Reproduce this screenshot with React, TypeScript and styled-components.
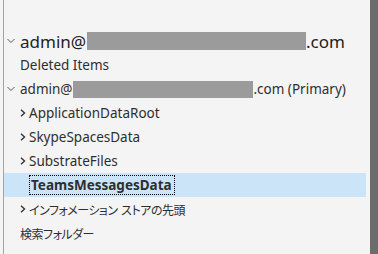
import React from "react";
import styled, { createGlobalStyle } from "styled-components";

const GlobalStyle = createGlobalStyle`
  html, body { margin: 0; padding: 0; background: #f4f4f4; }
  body { font-family: "Noto Sans", "Noto Sans CJK JP", sans-serif; }
`;

const Frame = styled.div`
  display: flex;
  width: 378px;
  height: 254px;
  background: #f4f4f4;
  overflow: hidden;
`;

const Pane = styled.div`
  flex: 1;
  margin-left: 3px;
  border-left: 1px solid #a3a3a3;
  padding: 29px 4px 0 0;
  display: flex;
  flex-direction: column;
`;

const Scrollbar = styled.div`
  width: 8px;
  background: #6c6c6c;
`;

const Row = styled.div<{ $indent: number; $selected?: boolean }>`
  height: 24px;
  display: flex;
  align-items: center;
  padding-left: ${(p) => p.$indent}px;
  background: ${(p) => (p.$selected ? "#cce4f7" : "transparent")};
  color: #2e2e2e;
  font-size: 13.5px;
  white-space: nowrap;
`;

const ChevronBox = styled.span<{ $w: number }>`
  display: inline-flex;
  align-items: center;
  justify-content: flex-start;
  width: ${(p) => p.$w}px;
  flex: none;
`;

const Label = styled.span<{ $size?: number }>`
  font-size: ${(p) => p.$size ?? 13.5}px;
  color: ${(p) => (p.$size ? "#222" : "#2e2e2e")};
  display: inline-flex;
  align-items: center;
`;

const JaLabel = styled.span`
  font-family: "Noto Sans CJK JP", sans-serif;
  font-size: 12px;
  font-feature-settings: "palt";
  letter-spacing: -0.5px;
  word-spacing: 1.5px;
  color: #2e2e2e;
`;

const Redact = styled.span<{ $w: number; $h: number }>`
  display: inline-block;
  width: ${(p) => p.$w}px;
  height: ${(p) => p.$h}px;
  background: #9b9b9b;
  margin-left: 1px;
`;

const Focus = styled.span`
  font-weight: 700;
  color: #2e2e2e;
  border: 1px dotted #000;
  padding: 0 2px 0 1px;
  height: 18px;
  display: inline-flex;
  align-items: center;
`;

const Down = () => (
  <svg width="8" height="6" viewBox="0 0 8 6">
    <path d="M0.5 1 L4 4.5 L7.5 1" fill="none" stroke="#555" strokeWidth="1" />
  </svg>
);

const Right = () => (
  <svg width="6" height="8" viewBox="0 0 6 8">
    <path d="M1 0.8 L4.5 4 L1 7.2" fill="none" stroke="#333" strokeWidth="1.4" />
  </svg>
);

export default function App() {
  return (
    <>
      <GlobalStyle />
      <Frame>
        <Pane>
          <Row $indent={3}>
            <ChevronBox $w={13}><Down /></ChevronBox>
            <Label $size={17}>admin@<Redact $w={219} $h={18} />.com</Label>
          </Row>
          <Row $indent={16}>
            <Label>Deleted Items</Label>
          </Row>
          <Row $indent={3}>
            <ChevronBox $w={13}><Down /></ChevronBox>
            <Label>admin@<Redact $w={180} $h={17} />.com (Primary)</Label>
          </Row>
          <Row $indent={16}>
            <ChevronBox $w={9}><Right /></ChevronBox>
            <Label>ApplicationDataRoot</Label>
          </Row>
          <Row $indent={16}>
            <ChevronBox $w={9}><Right /></ChevronBox>
            <Label>SkypeSpacesData</Label>
          </Row>
          <Row $indent={16}>
            <ChevronBox $w={9}><Right /></ChevronBox>
            <Label>SubstrateFiles</Label>
          </Row>
          <Row $indent={25} $selected>
            <Focus>TeamsMessagesData</Focus>
          </Row>
          <Row $indent={16}>
            <ChevronBox $w={9}><Right /></ChevronBox>
            <JaLabel>インフォメーション ストアの先頭</JaLabel>
          </Row>
          <Row $indent={16}>
            <JaLabel>検索フォルダー</JaLabel>
          </Row>
        </Pane>
        <Scrollbar />
      </Frame>
    </>
  );
}
